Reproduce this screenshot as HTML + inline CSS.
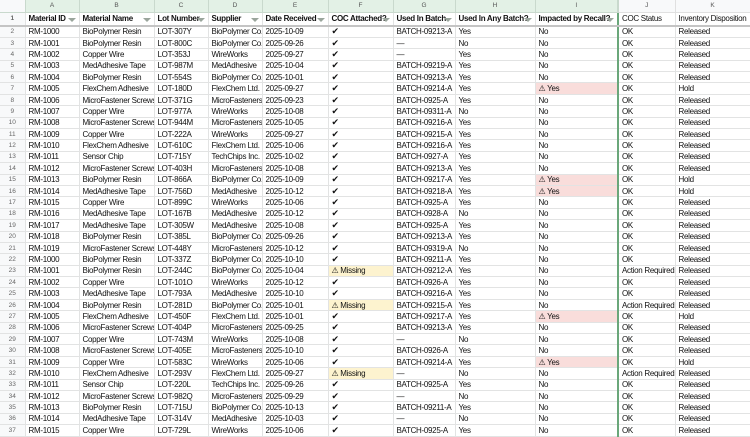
<!DOCTYPE html>
<html><head><meta charset="utf-8"><style>
body{margin:0;width:750px;height:435px;overflow:hidden;background:#fff;font-family:"Liberation Sans",Arial,sans-serif;}
table{border-collapse:collapse;table-layout:fixed;width:750px;}
td{font-size:8px;letter-spacing:-0.3px;padding:0 3px;white-space:nowrap;overflow:hidden;border-right:1px solid #e2e3e3;border-bottom:1px solid #e2e3e3;height:11.4px;line-height:9px;color:#111;box-sizing:border-box;position:relative;}
tr.h td{height:12px;background:#e3f1e6;color:#555;text-align:center;font-size:6.5px;border-color:#c9d9cd;letter-spacing:0;}
tr.h td.w{background:#f8f9fa;border-color:#e0e0e0;}
tr.r1 td{height:14px;font-weight:bold;border-bottom:2px solid #c4c4c4;}
td.n{background:#f8f9fa;color:#666;text-align:center;font-size:6.5px;padding:0;letter-spacing:0;}
tr.h td.n{background:#f8f9fa;}
td.gl{border-right:2px solid #6aa77a;}
.f{position:absolute;right:3px;top:5px;width:0;height:0;border-left:4px solid transparent;border-right:4px solid transparent;border-top:4px solid #9aa59c;}
td.y{background:#fdf3cf;}
td.p{background:#f9dddb;}
tr.r1 td.nb{font-weight:normal;}
td.ck{font-size:9px;}
</style></head><body>
<table>
<colgroup><col style="width:25px"><col style="width:54px"><col style="width:75px"><col style="width:54px"><col style="width:54px"><col style="width:66px"><col style="width:65px"><col style="width:62px"><col style="width:80px"><col style="width:83px"><col style="width:57px"><col style="width:75px"></colgroup>
<tr class="h"><td class="n"></td><td>A</td><td>B</td><td>C</td><td>D</td><td>E</td><td>F</td><td>G</td><td>H</td><td class="gl">I</td><td class="w">J</td><td class="w">K</td></tr>
<tr class="r1"><td class="n">1</td><td>Material ID<span class="f"></span></td><td>Material Name<span class="f"></span></td><td>Lot Number<span class="f"></span></td><td>Supplier<span class="f"></span></td><td>Date Received<span class="f"></span></td><td>COC Attached?<span class="f"></span></td><td>Used In Batch<span class="f"></span></td><td>Used In Any Batch?<span class="f"></span></td><td class="gl">Impacted by Recall?<span class="f"></span></td><td class="nb">COC Status</td><td class="nb">Inventory Disposition</td></tr>
<tbody id="b"></tbody>
</table>
<script>
var d=`RM-1000|BioPolymer Resin|LOT-307Y|BioPolymer Co.|2025-10-09|C|BATCH-09213-A|Yes|No|OK|Released
RM-1001|BioPolymer Resin|LOT-800C|BioPolymer Co.|2025-09-26|C|—|No|No|OK|Released
RM-1002|Copper Wire|LOT-353J|WireWorks|2025-09-27|C|—|Yes|No|OK|Released
RM-1003|MedAdhesive Tape|LOT-987M|MedAdhesive|2025-10-04|C|BATCH-09219-A|Yes|No|OK|Released
RM-1004|BioPolymer Resin|LOT-554S|BioPolymer Co.|2025-10-01|C|BATCH-09213-A|Yes|No|OK|Released
RM-1005|FlexChem Adhesive|LOT-180D|FlexChem Ltd.|2025-09-27|C|BATCH-09214-A|Yes|R|OK|Hold
RM-1006|MicroFastener Screws|LOT-371G|MicroFasteners|2025-09-23|C|BATCH-0925-A|Yes|No|OK|Released
RM-1007|Copper Wire|LOT-977A|WireWorks|2025-10-08|C|BATCH-09311-A|No|No|OK|Released
RM-1008|MicroFastener Screws|LOT-944M|MicroFasteners|2025-10-05|C|BATCH-09216-A|Yes|No|OK|Released
RM-1009|Copper Wire|LOT-222A|WireWorks|2025-09-27|C|BATCH-09215-A|Yes|No|OK|Released
RM-1010|FlexChem Adhesive|LOT-610C|FlexChem Ltd.|2025-10-06|C|BATCH-09216-A|Yes|No|OK|Released
RM-1011|Sensor Chip|LOT-715Y|TechChips Inc.|2025-10-02|C|BATCH-0927-A|Yes|No|OK|Released
RM-1012|MicroFastener Screws|LOT-403H|MicroFasteners|2025-10-08|C|BATCH-09213-A|Yes|No|OK|Released
RM-1013|BioPolymer Resin|LOT-866A|BioPolymer Co.|2025-10-09|C|BATCH-09217-A|Yes|R|OK|Hold
RM-1014|MedAdhesive Tape|LOT-756D|MedAdhesive|2025-10-12|C|BATCH-09218-A|Yes|R|OK|Hold
RM-1015|Copper Wire|LOT-899C|WireWorks|2025-10-06|C|BATCH-0925-A|Yes|No|OK|Released
RM-1016|MedAdhesive Tape|LOT-167B|MedAdhesive|2025-10-12|C|BATCH-0928-A|No|No|OK|Released
RM-1017|MedAdhesive Tape|LOT-305W|MedAdhesive|2025-10-08|C|BATCH-0925-A|Yes|No|OK|Released
RM-1018|BioPolymer Resin|LOT-385L|BioPolymer Co.|2025-09-26|C|BATCH-09213-A|Yes|No|OK|Released
RM-1019|MicroFastener Screws|LOT-448Y|MicroFasteners|2025-10-12|C|BATCH-09319-A|No|No|OK|Released
RM-1000|BioPolymer Resin|LOT-337Z|BioPolymer Co.|2025-10-10|C|BATCH-09211-A|Yes|No|OK|Released
RM-1001|BioPolymer Resin|LOT-244C|BioPolymer Co.|2025-10-04|M|BATCH-09212-A|Yes|No|Action Required|Released
RM-1002|Copper Wire|LOT-101O|WireWorks|2025-10-12|C|BATCH-0926-A|Yes|No|OK|Released
RM-1003|MedAdhesive Tape|LOT-793A|MedAdhesive|2025-10-10|C|BATCH-09216-A|Yes|No|OK|Released
RM-1004|BioPolymer Resin|LOT-281D|BioPolymer Co.|2025-10-01|M|BATCH-09215-A|Yes|No|Action Required|Released
RM-1005|FlexChem Adhesive|LOT-450F|FlexChem Ltd.|2025-10-01|C|BATCH-09217-A|Yes|R|OK|Hold
RM-1006|MicroFastener Screws|LOT-404P|MicroFasteners|2025-09-25|C|BATCH-09213-A|Yes|No|OK|Released
RM-1007|Copper Wire|LOT-743M|WireWorks|2025-10-08|C|—|No|No|OK|Released
RM-1008|MicroFastener Screws|LOT-405E|MicroFasteners|2025-10-10|C|BATCH-0926-A|Yes|No|OK|Released
RM-1009|Copper Wire|LOT-583C|WireWorks|2025-10-06|C|BATCH-09214-A|Yes|R|OK|Hold
RM-1010|FlexChem Adhesive|LOT-293V|FlexChem Ltd.|2025-09-27|M|—|No|No|Action Required|Released
RM-1011|Sensor Chip|LOT-220L|TechChips Inc.|2025-09-26|C|BATCH-0925-A|Yes|No|OK|Released
RM-1012|MicroFastener Screws|LOT-982Q|MicroFasteners|2025-09-29|C|—|No|No|OK|Released
RM-1013|BioPolymer Resin|LOT-715U|BioPolymer Co.|2025-10-13|C|BATCH-09211-A|Yes|No|OK|Released
RM-1014|MedAdhesive Tape|LOT-314V|MedAdhesive|2025-10-03|C|—|No|No|OK|Released
RM-1015|Copper Wire|LOT-729L|WireWorks|2025-10-06|C|BATCH-0925-A|Yes|No|OK|Released`.split("\n");
var h="";d.forEach(function(l,i){var c=l.split("|");h+='<tr style="height:11.4px"><td class="n">'+(i+2)+'</td>';
for(var j=0;j<11;j++){var v=c[j],cl="";
if(j==5){if(v=="C"){v="✔";cl="ck";}else{v="⚠ Missing";cl="y";}}
if(j==8){cl="gl";if(v=="R"){v="⚠ Yes";cl="gl p";}}
h+='<td'+(cl?' class="'+cl+'"':'')+'>'+v+'</td>';}
h+='</tr>';});document.getElementById("b").innerHTML=h;
</script>
</body></html>
